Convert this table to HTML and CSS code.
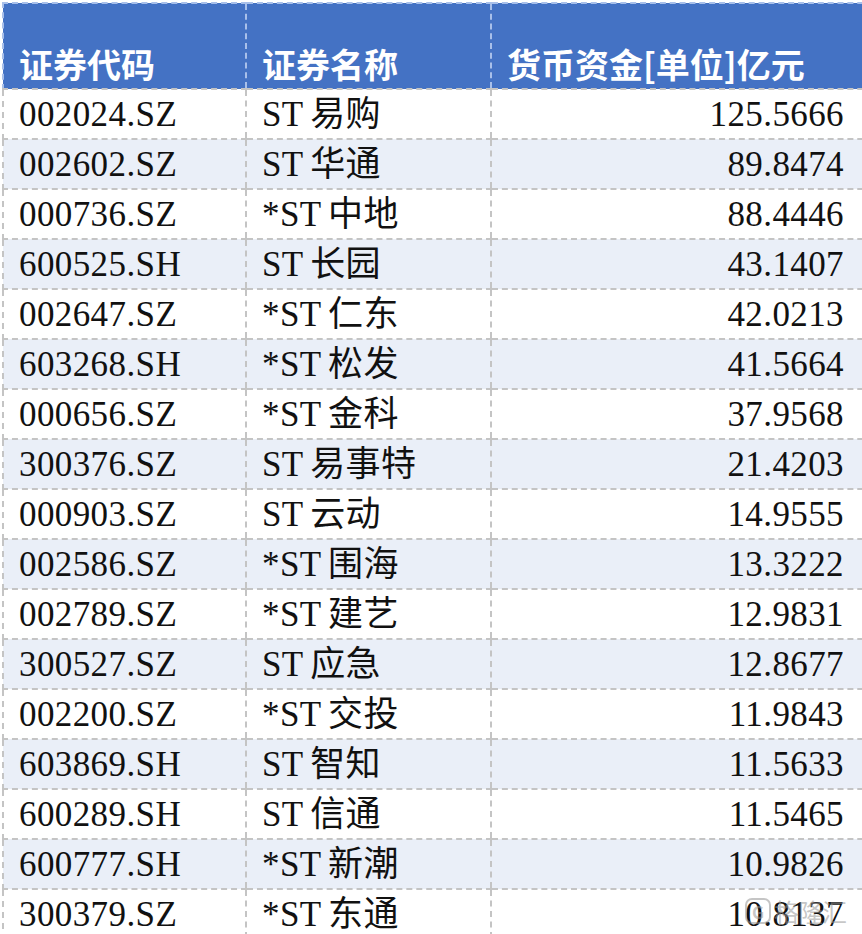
FILE: index.html
```html
<!DOCTYPE html>
<html lang="zh">
<head>
<meta charset="utf-8">
<title>货币资金</title>
<link rel="stylesheet" href="styles.css">
</head>
<body>
<div class="wrap">
<table class="grid">
<colgroup><col class="c1"><col class="c2"><col class="c3"></colgroup>
<thead>
<tr><th>证券代码</th><th>证券名称</th><th>货币资金[单位]亿元</th></tr>
</thead>
<tbody>
<tr><td>002024.SZ</td><td>ST 易购</td><td class="num">125.5666</td></tr>
<tr><td>002602.SZ</td><td>ST 华通</td><td class="num">89.8474</td></tr>
<tr><td>000736.SZ</td><td>*ST 中地</td><td class="num">88.4446</td></tr>
<tr><td>600525.SH</td><td>ST 长园</td><td class="num">43.1407</td></tr>
<tr><td>002647.SZ</td><td>*ST 仁东</td><td class="num">42.0213</td></tr>
<tr><td>603268.SH</td><td>*ST 松发</td><td class="num">41.5664</td></tr>
<tr><td>000656.SZ</td><td>*ST 金科</td><td class="num">37.9568</td></tr>
<tr><td>300376.SZ</td><td>ST 易事特</td><td class="num">21.4203</td></tr>
<tr><td>000903.SZ</td><td>ST 云动</td><td class="num">14.9555</td></tr>
<tr><td>002586.SZ</td><td>*ST 围海</td><td class="num">13.3222</td></tr>
<tr><td>002789.SZ</td><td>*ST 建艺</td><td class="num">12.9831</td></tr>
<tr><td>300527.SZ</td><td>ST 应急</td><td class="num">12.8677</td></tr>
<tr><td>002200.SZ</td><td>*ST 交投</td><td class="num">11.9843</td></tr>
<tr><td>603869.SH</td><td>ST 智知</td><td class="num">11.5633</td></tr>
<tr><td>600289.SH</td><td>ST 信通</td><td class="num">11.5465</td></tr>
<tr><td>600777.SH</td><td>*ST 新潮</td><td class="num">10.9826</td></tr>
<tr><td>300379.SZ</td><td>*ST 东通</td><td class="num">10.8137</td></tr>
</tbody>
</table>
<div class="mark"><span class="g">G</span>格隆汇</div>
</div>
</body>
</html>
```
FILE: styles.css
```css
html, body {
  margin: 0;
  padding: 0;
  background: #ffffff;
  overflow: hidden;
}
.wrap {
  position: relative;
  width: 862px;
  height: 934px;
  overflow: hidden;
  padding: 2px 0 0 2px;
  box-sizing: border-box;
}
.grid {
  border-collapse: collapse;
  table-layout: fixed;
  width: 880px;
  font-family: "Liberation Serif", "Noto Sans CJK SC", serif;
  font-size: 35px;
  color: #111111;
}
.c1 { width: 243px; }
.c2 { width: 245px; }
.c3 { width: 392px; }
.grid th {
  background: #4472c4;
  color: #ffffff;
  font-family: "Noto Sans CJK SC", sans-serif;
  font-weight: 700;
  font-size: 34px;
  text-align: left;
  vertical-align: bottom;
  height: 86px;
  padding: 0 0 0 15px;
  box-sizing: border-box;
  line-height: 48px;
  border-top: 2px dashed #a9c0ea;
  border-left: 2px dashed #a9c0ea;
  border-bottom: 2px dashed #c4c4c4;
  white-space: nowrap;
}
.grid td {
  height: 50px;
  padding: 2px 0 0 15px;
  box-sizing: border-box;
  line-height: 46px;
  vertical-align: middle;
  border-left: 2px dashed #c4c4c4;
  border-bottom: 2px dashed #c4c4c4;
  white-space: nowrap;
  word-spacing: -2px;
  letter-spacing: 0.4px;
}
.grid tbody tr:nth-child(even) td {
  background: #eaeff8;
}
.grid td.num {
  text-align: right;
  padding: 2px 39px 0 0;
}
.mark {
  position: absolute;
  right: 16px;
  bottom: 5px;
  font-family: "Noto Sans CJK SC", sans-serif;
  font-size: 25px;
  color: rgba(150, 150, 150, 0.55);
  display: flex;
  align-items: center;
  gap: 3px;
  letter-spacing: -1px;
}
.mark .g {
  display: inline-flex;
  width: 22px;
  height: 22px;
  border: 2px solid rgba(150, 150, 150, 0.55);
  border-radius: 7px;
  align-items: center;
  justify-content: center;
  font-size: 17px;
  font-weight: 700;
  letter-spacing: 0;
}
```
